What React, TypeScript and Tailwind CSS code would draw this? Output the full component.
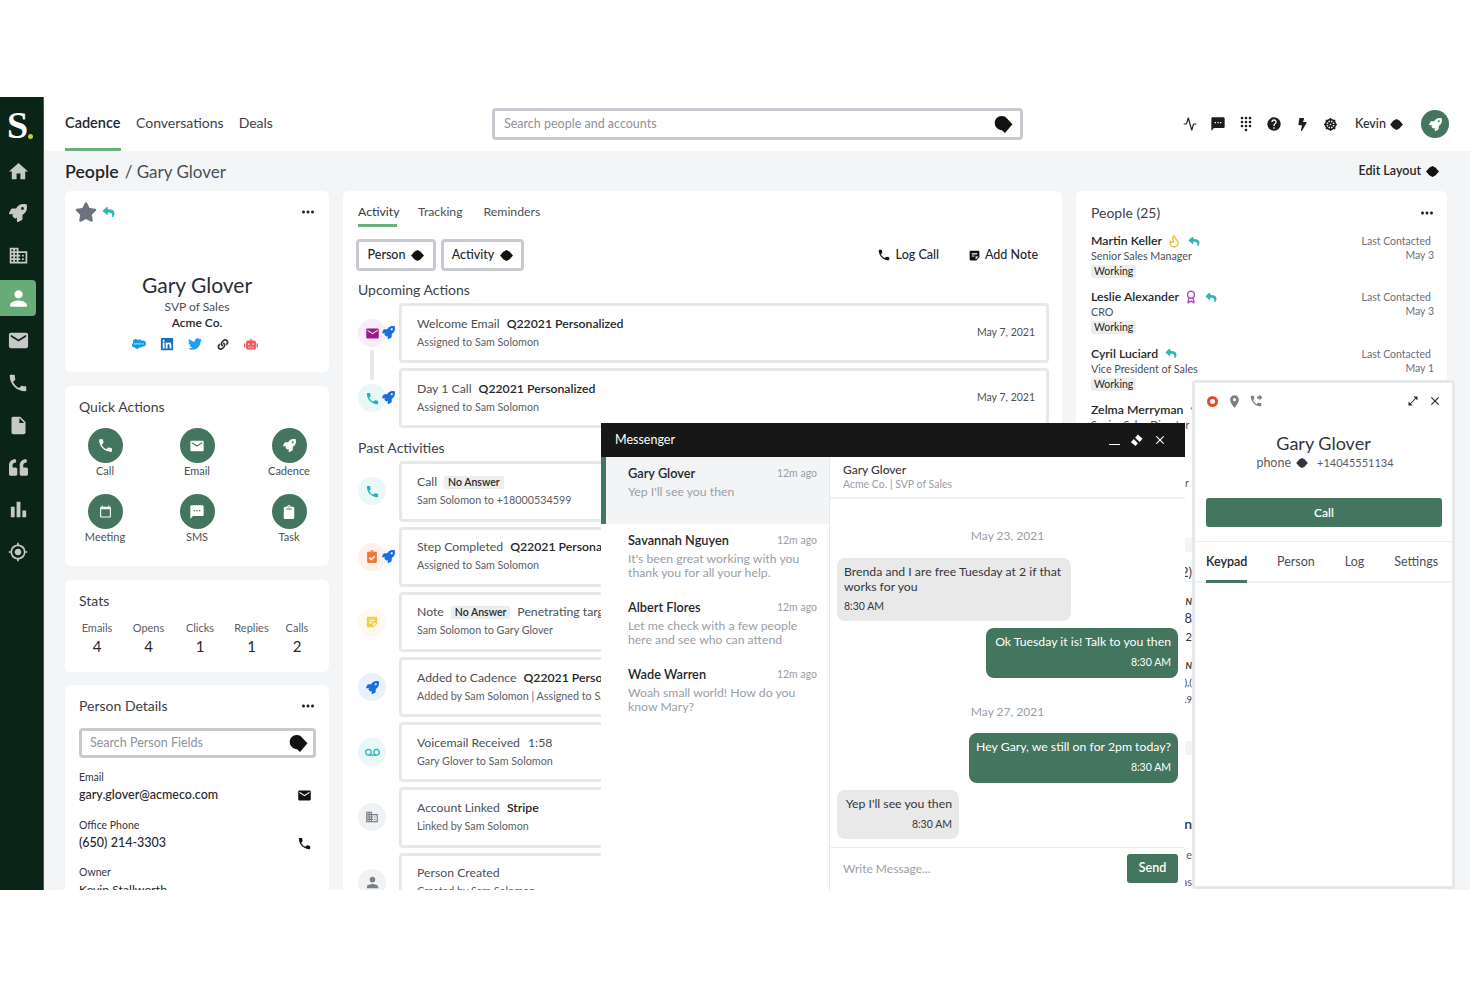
import React from 'react';
import { FaRocket, FaQuoteLeft, FaStar, FaReply, FaSalesforce, FaLinkedin, FaTwitter, FaLink, FaRobot, FaClipboard, FaClipboardCheck, FaDharmachakra, FaBolt } from 'react-icons/fa';
import { MdHome, MdPerson, MdEmail, MdPhone, MdGpsFixed, MdInsertDriveFile, MdMoreHoriz, MdCalendarToday, MdSms, MdStickyNote2, MdVoicemail, MdDomain, MdDialpad, MdHelp, MdLocationOn, MdPhoneForwarded, MdOpenInFull, MdClose, MdBarChart } from 'react-icons/md';
import { Activity, Flame, Award } from 'lucide-react';

const Blob = ({ className = '' }: { className?: string }) => (
  <svg viewBox="0 0 14 12" className={className} fill="currentColor"><path d="M7 0 9.500 1.300 10.500 2 14 6 10.500 10 9.500 10.700 7 12 4.500 10.700 3.500 10 0 6 3.500 2 4.500 1.300Z" /></svg>
);
const Tag = ({ className = '' }: { className?: string }) => (
  <svg viewBox="0 0 20 20" className={className} fill="currentColor"><path d="M8 1c2.400 0 4.200.7 5.400 2.500l6 6.300-7.800 9.200-3.200-2.900C4.300 15.300.8 13 .8 8.300.8 4.300 4 1 8 1Z" /></svg>
);
const Dots = () => <MdMoreHoriz className="w-[18px] h-[18px] text-[#1f2328]" />;

const sideIcons = [
  <MdHome className="w-[23px] h-[23px]" />,
  <FaRocket className="w-[18px] h-[18px]" />,
  <MdDomain className="w-[21px] h-[21px]" />,
  <MdPerson className="w-[25px] h-[25px] text-white" />,
  <MdEmail className="w-[23px] h-[23px]" />,
  <MdPhone className="w-[22px] h-[22px]" />,
  <MdInsertDriveFile className="w-[21px] h-[21px]" />,
  <FaQuoteLeft className="w-[19px] h-[19px]" />,
  <MdBarChart className="w-[23px] h-[23px]" />,
  <MdGpsFixed className="w-[20px] h-[20px]" />,
];

function Sidebar() {
  return (
    <div className="w-[44px] shrink-0 bg-[#0a2418] border-r border-[#4b5a52] flex flex-col text-[#c5c9c7]">
      <div className="h-[56px] pl-[7px] flex items-center">
        <span className="font-['Liberation_Serif',serif] font-bold text-white text-[38px] leading-none">S</span>
        <span className="w-[5px] h-[5px] rounded-full bg-[#b6d334] self-end mb-[14px]" />
      </div>
      <div className="flex flex-col">
        {sideIcons.map((ic, i) => (
          <div key={i} className={`h-[36px] w-[36px] mb-[6.35px] flex items-center justify-center rounded-r-[4px] ${i === 3 ? 'bg-[#67ab78]' : ''}`}>{ic}</div>
        ))}
      </div>
    </div>
  );
}

function TopBar() {
  const right = [
    <Activity className="w-[14px] h-[14px]" strokeWidth={2} />,
    <MdSms className="w-[16px] h-[16px]" />,
    <MdDialpad className="w-[16px] h-[16px]" />,
    <MdHelp className="w-[16px] h-[16px]" />,
    <FaBolt className="w-[11px] h-[13px]" />,
    <FaDharmachakra className="w-[13px] h-[13px]" />,
  ];
  return (
    <div className="h-[54px] bg-white flex items-stretch shrink-0">
      <div className="w-[448px] pl-[21px] flex gap-[15px] text-[14px] text-[#3d4149]">
        <div className="w-[56px] h-[54px] pt-[17px] border-b-[3px] border-[#6bb07c] text-[14.5px] font-semibold text-[#24272c] leading-[17px] whitespace-nowrap">Cadence</div>
        <div className="pt-[17px] leading-[17px]">Conversations</div>
        <div className="pt-[17px] leading-[17px]">Deals</div>
      </div>
      <div className="w-[531px] h-[32px] mt-[11px] border-[3px] border-[#c8cad0] rounded-[4px] pl-[9px] pr-[7px] flex items-center justify-between">
        <span className="text-[12.5px] text-[#8e929a]">Search people and accounts</span>
        <Tag className="w-[19px] h-[19px] text-[#111]" />
      </div>
      <div className="flex items-center pl-[159px] text-[#1b1d20]">
        {right.map((ic, i) => <div key={i} className="w-[16px] h-[16px] mr-[12px] flex items-center justify-center">{ic}</div>)}
        <span className="ml-[5px] text-[12.5px] font-medium text-[#2a2d33] w-[32px]">Kevin</span>
        <Blob className="w-[13px] h-[11px] ml-[3px]" />
        <div className="ml-[18px] w-[28px] h-[28px] rounded-full bg-[#44755f] flex items-center justify-center">
          <FaRocket className="w-[13px] h-[13px] text-white" />
        </div>
      </div>
    </div>
  );
}

const Card = ({ className = '', children }: { className?: string; children: React.ReactNode }) => (
  <div className={`bg-white rounded-[6px] ${className}`}>{children}</div>
);
const H = ({ children, className = '' }: { children: React.ReactNode; className?: string }) => (
  <div className={`text-[14px] leading-[20px] text-[#3d4149] ${className}`}>{children}</div>
);

function LeftColumn() {
  const qa = [
    [<MdPhone className="w-[17px] h-[17px]" />, 'Call'],
    [<MdEmail className="w-[16px] h-[16px]" />, 'Email'],
    [<FaRocket className="w-[13px] h-[13px]" />, 'Cadence'],
    [<MdCalendarToday className="w-[13px] h-[13px]" />, 'Meeting'],
    [<MdSms className="w-[16px] h-[16px]" />, 'SMS'],
    [<FaClipboard className="w-[12px] h-[14px]" />, 'Task'],
  ] as const;
  const stats = [['Emails', '4'], ['Opens', '4'], ['Clicks', '1'], ['Replies', '1'], ['Calls', '2']];
  return (
    <div className="w-[264px] shrink-0">
      <Card className="h-[181px] mb-[14px]">
        <div className="pt-[10px] pl-[10px] pr-[12px] h-[32px] flex items-center justify-between">
          <div className="flex items-center gap-[5px]">
            <FaStar className="w-[22px] h-[22px] text-[#6c7280]" />
            <FaReply className="w-[13px] h-[12px] text-[#2fb6bb]" />
          </div>
          <Dots />
        </div>
        <div className="mt-[49px] text-center text-[21px] leading-[26px] text-[#2a2d33]">Gary Glover</div>
        <div className="mt-px text-center text-[12px] leading-[16px] text-[#4b4f57]">SVP of Sales</div>
        <div className="text-center text-[12px] leading-[16px] font-semibold text-[#24272c]">Acme Co.</div>
        <div className="mt-[6px] pr-[4px] flex justify-center items-center gap-[14px]">
          <FaSalesforce className="w-[14px] h-[14px] text-[#0f9be3]" />
          <FaLinkedin className="w-[14px] h-[14px] text-[#1470b8]" />
          <FaTwitter className="w-[14px] h-[14px] text-[#1da1f2]" />
          <FaLink className="w-[14px] h-[11px] text-[#333]" />
          <FaRobot className="w-[14px] h-[14px] text-[#f0565c]" />
        </div>
      </Card>

      <Card className="h-[180px] mb-[14px] pt-[11px]">
        <H className="pl-[14px]">Quick Actions</H>
        <div className="mt-[11px] grid grid-cols-[80px_80px_80px] gap-x-[12px] gap-y-[16px]">
          {qa.map(([ic, l]) => (
            <div key={l} className="flex flex-col items-center">
              <div className="w-[35px] h-[35px] rounded-full bg-[#44755f] text-white flex items-center justify-center">{ic}</div>
              <div className="mt-px text-[11px] leading-[14px] text-[#4b4f57]">{l}</div>
            </div>
          ))}
        </div>
      </Card>

      <Card className="h-[92px] mb-[13px] pt-[11px]">
        <H className="pl-[14px]">Stats</H>
        <div className="mt-[10px] pl-[6px] grid grid-cols-[52px_51px_52px_51px_40px]">
          {stats.map(([l, v]) => (
            <div key={l} className="text-center">
              <div className="text-[11px] leading-[14px] text-[#5a5e66]">{l}</div>
              <div className="mt-[2px] text-[15px] leading-[18px] text-[#24272c]">{v}</div>
            </div>
          ))}
        </div>
      </Card>

      <Card className="h-[300px] pt-[11px] rounded-b-none">
        <div className="pl-[14px] pr-[12px] flex items-center justify-between">
          <H>Person Details</H>
          <Dots />
        </div>
        <div className="mt-[12px] ml-[14px] mr-[13px] h-[30px] border-[3px] border-[#c8cad0] rounded-[4px] pl-[8px] pr-[5px] flex items-center justify-between">
          <span className="text-[12.5px] text-[#8e929a]">Search Person Fields</span>
          <Tag className="w-[19px] h-[19px] text-[#111]" />
        </div>
        <div className="px-[14px]">
          <div className="mt-[12px] text-[10.5px] leading-[14px] text-[#33363c]">Email</div>
          <div className="mt-[2px] flex justify-between items-center text-[12.5px] leading-[18px] font-medium text-[#24272c]">gary.glover@acmeco.com<MdEmail className="w-[15px] h-[15px] text-[#111] mr-[3px]" /></div>
          <div className="mt-[14px] text-[10.5px] leading-[14px] text-[#33363c]">Office Phone</div>
          <div className="mt-[2px] flex justify-between items-center text-[12.5px] leading-[18px] font-medium text-[#24272c]">(650) 214-3303<MdPhone className="w-[15px] h-[15px] text-[#111] mr-[3px]" /></div>
          <div className="mt-[13px] text-[10.5px] leading-[14px] text-[#33363c]">Owner</div>
          <div className="mt-[2px] text-[12.25px] leading-[18px] text-[#24272c]">Kevin Stallworth</div>
        </div>
      </Card>
    </div>
  );
}

type Row = { icon: React.ReactNode; bg: string; rocket?: boolean; title: React.ReactNode; sub: string; date?: string };

const Bold = ({ children }: { children: React.ReactNode }) => <span className="font-semibold text-[#24272c] ml-[7px]">{children}</span>;
const Pill = ({ children }: { children: React.ReactNode }) => (
  <span className="ml-[7px] px-[4px] bg-[#eceded] rounded-[2px] text-[10.5px] font-semibold text-[#24272c] inline-block leading-[13px]">{children}</span>
);

function ActivityRow({ r }: { r: Row }) {
  return (
    <div className="flex">
      <div className="relative w-[41px] shrink-0 flex items-center">
        <div className={`w-[28px] h-[28px] rounded-full flex items-center justify-center ${r.bg}`}>{r.icon}</div>
        {r.rocket && <FaRocket className="absolute left-[24px] top-[23px] w-[13px] h-[13px] text-[#1a6fe0]" />}
      </div>
      <div className="flex-1 h-[60.2px] border-[3px] border-[#e7e8ea] rounded-[4px] pl-[15px] pr-[11px] flex items-center justify-between min-w-0 overflow-hidden">
        <div className="whitespace-nowrap mb-[3px]">
          <div className="text-[12.25px] leading-[17px] text-[#4b4f57]">{r.title}</div>
          <div className="mt-[2px] text-[10.75px] leading-[15px] text-[#5a5e66]">{r.sub}</div>
        </div>
        {r.date && <div className="text-[10.5px] text-[#4b4f57] whitespace-nowrap">{r.date}</div>}
      </div>
    </div>
  );
}

const upcoming: Row[] = [
  { icon: <MdEmail className="w-[15px] h-[15px] text-[#a0168f]" />, bg: 'bg-[#f8edf6]', rocket: true, title: <>Welcome Email<Bold>Q22021 Personalized</Bold></>, sub: 'Assigned to Sam Solomon', date: 'May 7, 2021' },
  { icon: <MdPhone className="w-[15px] h-[15px] text-[#1fb3b8]" />, bg: 'bg-[#eaf7f7]', rocket: true, title: <>Day 1 Call<Bold>Q22021 Personalized</Bold></>, sub: 'Assigned to Sam Solomon', date: 'May 7, 2021' },
];
const past: Row[] = [
  { icon: <MdPhone className="w-[15px] h-[15px] text-[#1fb3b8]" />, bg: 'bg-[#eaf7f7]', title: <>Call<Pill>No Answer</Pill></>, sub: 'Sam Solomon to +18000534599', date: 'May 7, 2021' },
  { icon: <FaClipboardCheck className="w-[12px] h-[13px] text-[#f0763a]" />, bg: 'bg-[#fdf1ec]', rocket: true, title: <>Step Completed<Bold>Q22021 Personalized</Bold></>, sub: 'Assigned to Sam Solomon', date: 'May 7, 2021' },
  { icon: <MdStickyNote2 className="w-[14px] h-[14px] text-[#f2cf4f]" />, bg: 'bg-[#fdf9ec]', title: <>Note<Pill>No Answer</Pill><span className="ml-[7px]">Penetrating target accounts</span></>, sub: 'Sam Solomon to Gary Glover', date: 'May 7, 2021' },
  { icon: <FaRocket className="w-[13px] h-[13px] text-[#1a6fe0]" />, bg: 'bg-[#e9f1fc]', title: <>Added to Cadence<Bold>Q22021 Personalized</Bold></>, sub: 'Added by Sam Solomon | Assigned to Sam Solomon', date: 'May 7, 2021' },
  { icon: <MdVoicemail className="w-[15px] h-[15px] text-[#1fb3b8]" />, bg: 'bg-[#eaf7f7]', title: <>Voicemail Received<span className="ml-[8px]">1:58</span></>, sub: 'Gary Glover to Sam Solomon', date: 'May 7, 2021' },
  { icon: <MdDomain className="w-[14px] h-[14px] text-[#7b8088]" />, bg: 'bg-[#f1f2f4]', title: <>Account Linked<Bold>Stripe</Bold></>, sub: 'Linked by Sam Solomon', date: 'May 7, 2021' },
  { icon: <MdPerson className="w-[17px] h-[17px] text-[#7b8088]" />, bg: 'bg-[#f1f2f4]', title: <>Person Created</>, sub: 'Created by Sam Solomon', date: 'May 7, 2021' },
];

function MiddleColumn() {
  return (
    <Card className="w-[719px] shrink-0 h-[720px] pl-[15px] pr-[13px] rounded-b-none">
      <div className="flex gap-[21px] text-[12.25px] leading-[16px] text-[#4b4f57]">
        <div className="w-[39px] pt-[13px] pb-[4px] border-b-[3px] border-[#6bb07c] text-[#33363c] whitespace-nowrap">Activity</div>
        <div className="pt-[13px]">Tracking</div>
        <div className="pt-[13px]">Reminders</div>
      </div>
      <div className="mt-[12px] flex items-center justify-between pr-[11px]">
        <div className="flex gap-[5px] -ml-[2px]">
          <div className="w-[80px] h-[32px] border-[3px] border-[#c8cad0] rounded-[4px] flex items-center justify-center gap-[6px] text-[12.5px] font-medium text-[#24272c]">Person<Blob className="w-[13px] h-[11px] text-[#111]" /></div>
          <div className="w-[83px] h-[32px] border-[3px] border-[#c8cad0] rounded-[4px] flex items-center justify-center gap-[6px] text-[12.5px] font-medium text-[#24272c]">Activity<Blob className="w-[13px] h-[11px] text-[#111]" /></div>
        </div>
        <div className="flex items-center text-[12.5px] font-medium text-[#24272c]">
          <MdPhone className="w-[14px] h-[14px] text-[#111] mr-[5px]" />Log Call
          <MdStickyNote2 className="w-[13px] h-[13px] text-[#111] ml-[29px] mr-[4px]" />Add Note
        </div>
      </div>
      <H className="mt-[9px]">Upcoming Actions</H>
      <div className="relative mt-[3px] flex flex-col gap-[5px]">
        <div className="absolute left-[12px] top-[47px] w-[4px] h-[30px] bg-[#e7e8ea]" />
        {upcoming.map((r, i) => <ActivityRow key={i} r={r} />)}
      </div>
      <H className="mt-[10px]">Past Activities</H>
      <div className="mt-[3px] flex flex-col gap-[5px]">
        {past.map((r, i) => <ActivityRow key={i} r={r} />)}
      </div>
    </Card>
  );
}

const people = [
  { n: 'Martin Keller', t: 'Senior Sales Manager', d: 'May 3', badge: <Flame className="w-[14px] h-[14px] text-[#eec03f]" strokeWidth={2.5} /> },
  { n: 'Leslie Alexander', t: 'CRO', d: 'May 3', badge: <Award className="w-[14px] h-[14px] text-[#b04cc0]" strokeWidth={2.5} /> },
  { n: 'Cyril Luciard', t: 'Vice President of Sales', d: 'May 1', badge: null },
  { n: 'Zelma Merryman', t: 'Senior Sales Director', d: 'May 1', badge: null },
];

const behind: [number, string, string][] = [
  [17, '', ''],
  [14, 'Manager', 'text-[11px] text-[#5a5e66] pr-[3px]'],
  [49, '', ''],
  [14, '', 'bg-[#f3f4f6]'],
  [13, '', ''],
  [14, '2)', 'text-[13px] text-[#33363c]'],
  [3, '', 'border-b border-[#e7e8ea]'],
  [12, '', ''],
  [14, 'N', 'text-[9px] font-bold italic text-[#33363c]'],
  [3, '', ''],
  [14, '$8', 'text-[13px] text-[#33363c]'],
  [4, '', ''],
  [14, '12', 'text-[11px] text-[#33363c]'],
  [15, '', ''],
  [14, 'N', 'text-[9px] font-bold italic text-[#33363c]'],
  [3, '', ''],
  [14, '),(', 'text-[10px] text-[#33363c]'],
  [3, '', ''],
  [14, '19', 'text-[9px] text-[#33363c]'],
  [35, '', ''],
  [14, '', 'bg-[#f3f4f6]'],
  [61, '', ''],
  [16, 'n', 'text-[14px] font-semibold text-[#33363c]'],
  [15, '', ''],
  [14, 'e', 'text-[11px] text-[#5a5e66]'],
  [13, '', ''],
  [14, 'as', 'text-[11px] text-[#5a5e66]'],
];

function RightColumn() {
  return (
    <Card className="w-[371px] shrink-0 h-[720px] rounded-b-none overflow-hidden">
      <div className="h-[43px] pl-[15px] pr-[11px] flex items-center justify-between">
        <H>People (25)</H>
        <Dots />
      </div>
      <div className="-mt-px pl-[15px] pr-[13px]">
        {people.map((p) => (
          <div key={p.n} className="h-[56.3px] flex justify-between">
            <div>
              <div className="flex items-center gap-[5px] text-[12.25px] leading-[16px] font-semibold text-[#24272c]">
                {p.n}{p.badge}<FaReply className="w-[12px] h-[11px] text-[#2fb6bb] ml-[2px]" />
              </div>
              <div className="text-[10.75px] leading-[14px] text-[#4b4f57]">{p.t}</div>
              <div className="mt-[2px] block w-fit px-[3px] bg-[#eceded] rounded-[2px] text-[10.5px] leading-[13px] text-[#24272c]">Working</div>
            </div>
            <div className="text-right text-[10.5px] leading-[14px] text-[#6c7078]">
              <div className="pr-[3px] pt-px">Last Contacted</div>
              <div>{p.d}</div>
            </div>
          </div>
        ))}
      </div>
      <div className="w-[116px]">
        {behind.map(([h, t, c], i) => (
          <div key={i} className={`flex justify-end items-center whitespace-nowrap leading-none ${c}`} style={{ height: h }}>{t}</div>
        ))}
      </div>
    </Card>
  );
}

const convos = [
  { n: 'Gary Glover', m: ["Yep I'll see you then"], active: true },
  { n: 'Savannah Nguyen', m: ["It's been great working with you", 'thank you for all your help.'] },
  { n: 'Albert Flores', m: ['Let me check with a few people', 'here and see who can attend'] },
  { n: 'Wade Warren', m: ['Woah small world! How do you', 'know Mary?'] },
];

const bubbleText = 'text-[12.25px] leading-[14px]';

function Messenger() {
  return (
    <div className="absolute left-[601px] top-[326px] w-[584px] h-[467px] bg-white flex flex-col">
      <div className="h-[34px] shrink-0 bg-[#171717] pl-[14px] pr-[18px] flex items-center justify-between text-white">
        <span className="text-[12.5px]">Messenger</span>
        <div className="flex items-center gap-[10px]">
          <div className="w-[11px] h-[1.5px] bg-white mt-[9px]" />
          <svg viewBox="0 0 14 14" className="w-[13px] h-[13px]" fill="currentColor"><path d="M8.500.5 13.500 5 10.500 8.500 5.500 4ZM4 5.500 8.500 10 6 13 1 9Z" /></svg>
          <MdClose className="w-[14px] h-[14px]" />
        </div>
      </div>
      <div className="flex flex-1 min-h-0">
        <div className="w-[229px] shrink-0 border-r border-[#e7e8ea]">
          {convos.map((c) => (
            <div key={c.n} className={`h-[67px] pr-[12px] pt-[8px] ${c.active ? 'bg-[#f3f4f6] border-l-[5px] border-[#44755f] pl-[22px]' : 'pl-[27px]'}`}>
              <div className="flex items-center justify-between leading-[16px]">
                <span className="text-[12.75px] font-semibold text-[#24272c]">{c.n}</span>
                <span className="text-[10.5px] text-[#9a9ea6]">12m ago</span>
              </div>
              <div className="mt-[4px] text-[12.25px] leading-[14px] text-[#9a9ea6]">
                {c.m.map((l) => <div key={l}>{l}</div>)}
              </div>
            </div>
          ))}
        </div>
        <div className="flex-1 min-w-0 flex flex-col">
          <div className="h-[42px] shrink-0 border-b-2 border-[#f0f1f2] pl-[13px] pt-[6px]">
            <div className="text-[12px] leading-[14px] font-medium text-[#33363c]">Gary Glover</div>
            <div className="text-[10.5px] leading-[14px] text-[#9a9ea6]">Acme Co. | SVP of Sales</div>
          </div>
          <div className="flex-1 pl-[7px] pr-[7px] flex flex-col">
            <div className="mt-[29px] text-center text-[12px] leading-[16px] text-[#9a9ea6]">May 23, 2021</div>
            <div className="mt-[14px] w-[234px] h-[63px] bg-[#e9e9ea] rounded-[8px] px-[7px] pt-[6px] text-[#33363c] text-[12.25px] leading-[15px]">
              Brenda and I are free Tuesday at 2 if that works for you
              <div className="mt-[5px] text-[10.5px] leading-[14px]">8:30 AM</div>
            </div>
            <div className={`mt-[7px] self-end w-[192px] h-[50px] bg-[#44755f] rounded-[8px] px-[7px] pt-[7px] text-right text-white whitespace-nowrap ${bubbleText}`}>
              Ok Tuesday it is! Talk to you then
              <div className="mt-[6px] text-[10.5px]">8:30 AM</div>
            </div>
            <div className="mt-[26px] text-center text-[12px] leading-[16px] text-[#9a9ea6]">May 27, 2021</div>
            <div className={`mt-[13px] self-end w-[209px] h-[50px] bg-[#44755f] rounded-[8px] px-[7px] pt-[7px] text-right text-white whitespace-nowrap ${bubbleText}`}>
              Hey Gary, we still on for 2pm today?
              <div className="mt-[6px] text-[10.5px]">8:30 AM</div>
            </div>
            <div className={`mt-[7px] w-[122px] h-[49px] bg-[#e9e9ea] rounded-[8px] px-[7px] pt-[7px] text-right text-[#33363c] whitespace-nowrap ${bubbleText}`}>
              Yep I'll see you then
              <div className="mt-[6px] text-[10.5px]">8:30 AM</div>
            </div>
          </div>
          <div className="h-[43px] shrink-0 border-t border-[#eceded] pl-[13px] pr-[7px] flex items-start justify-between">
            <span className="mt-[13px] text-[12px] leading-[16px] text-[#9a9ea6]">Write Message...</span>
            <button className="mt-[6px] w-[51px] h-[29px] bg-[#44755f] rounded-[3px] text-white text-[12.5px] font-semibold">Send</button>
          </div>
        </div>
      </div>
    </div>
  );
}

function PhoneWidget() {
  return (
    <div className="absolute left-[1192px] top-[283px] w-[263px] h-[509px] bg-white border-[3px] border-[#e7e8ea] rounded-[3px]">
      <div className="h-[36px] pl-[12px] pr-[10px] flex items-center justify-between">
        <div className="flex items-center gap-[7px] text-[#7b8088]">
          <div className="w-[11px] h-[11px] rounded-full border-[3px] border-[#e8492b]" />
          <MdLocationOn className="w-[15px] h-[15px] ml-[2px]" />
          <MdPhoneForwarded className="w-[14px] h-[14px]" />
        </div>
        <div className="flex items-center gap-[9px] text-[#24272c]">
          <MdOpenInFull className="w-[12px] h-[12px]" />
          <MdClose className="w-[14px] h-[14px]" />
        </div>
      </div>
      <div className="mt-[12px] text-center text-[18px] leading-[24px] text-[#33363c]">Gary Glover</div>
      <div className="pl-[3px] flex justify-center items-center text-[12.5px] leading-[16px] text-[#5a5e66]">
        phone<Blob className="w-[12px] h-[10px] ml-[5px] mr-[9px] text-[#33363c]" /><span className="text-[11px]">+14045551134</span>
      </div>
      <button className="mt-[27px] mx-[11px] w-[236px] h-[29px] bg-[#44755f] rounded-[3px] text-white text-[12px] font-semibold">Call</button>
      <div className="mt-[14px] border-t border-[#eceded] h-[42px] pl-[11px] flex gap-[30px] text-[12.5px] text-[#4b4f57] border-b-2 border-b-[#f0f1f2]">
        <div className="w-[41px] pt-[11px] h-[41px] leading-[17px] font-semibold text-[#24272c] border-b-[3px] border-[#44755f] whitespace-nowrap">Keypad</div>
        <div className="pt-[11px] leading-[17px]">Person</div>
        <div className="pt-[11px] leading-[17px]">Log</div>
        <div className="pt-[11px] leading-[17px]">Settings</div>
      </div>
    </div>
  );
}

export default function App() {
  return (
    <div className="w-[1480px] h-[987px] bg-white pt-[97px] font-['Lato',sans-serif]">
      <div className="relative w-[1470px] h-[793px] flex overflow-hidden">
        <Sidebar />
        <div className="flex-1 min-w-0 flex flex-col">
          <TopBar />
          <div className="flex-1 bg-[#f4f5f7] px-[21px]">
            <div className="h-[40px] flex items-center justify-between">
              <div className="text-[17px] text-[#4b4f57]"><span className="text-[17.75px] font-semibold text-[#24272c]">People</span><span className="ml-[6px]">/ Gary Glover</span></div>
              <div className="flex items-center gap-[5px] text-[12.5px] font-semibold text-[#24272c] pr-[10px]">Edit Layout<Blob className="w-[13px] h-[11px] text-[#111]" /></div>
            </div>
            <div className="flex gap-[14px]">
              <LeftColumn />
              <MiddleColumn />
              <RightColumn />
            </div>
          </div>
        </div>
        <Messenger />
        <PhoneWidget />
      </div>
    </div>
  );
}
